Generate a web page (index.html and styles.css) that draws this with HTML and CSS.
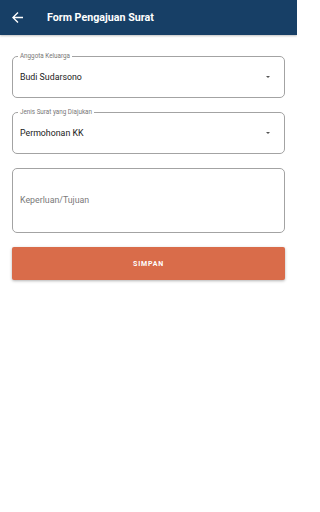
FILE: index.html
```html
<!DOCTYPE html>
<html lang="id">
<head>
<meta charset="utf-8">
<title>Form Pengajuan Surat</title>
<link rel="stylesheet" href="styles.css">
</head>
<body>
<header class="appbar">
  <svg class="back" viewBox="4 4 16 16" width="11" height="11" aria-hidden="true">
    <path d="M20 11H7.83l5.59-5.59L12 4l-8 8 8 8 1.41-1.41L7.83 13H20v-2z" fill="#fff"/>
  </svg>
  <h1 class="title">Form Pengajuan Surat</h1>
</header>
<main class="form">
  <div class="field select">
    <span class="label">Anggota Keluarga</span>
    <span class="value">Budi Sudarsono</span>
    <span class="caret"></span>
  </div>
  <div class="field select">
    <span class="label">Jenis Surat yang Diajukan</span>
    <span class="value">Permohonan KK</span>
    <span class="caret"></span>
  </div>
  <div class="field area">
    <span class="placeholder">Keperluan/Tujuan</span>
  </div>
  <button class="submit" type="button">SIMPAN</button>
</main>
</body>
</html>
```
FILE: styles.css
```css
* { box-sizing: border-box; }
html, body { margin: 0; padding: 0; background: #fff; }
body { font-family: Roboto, "Noto Sans", sans-serif; width: 297px; min-height: 512px; overflow: hidden; }

.appbar {
  height: 35px;
  background: #173f66;
  display: flex;
  align-items: center;
  padding-left: 12px;
  box-shadow: 0 1px 2px rgba(0,0,0,0.25);
}
.back { display: block; flex: none; }
.title {
  margin: 0 0 0 24px;
  font-size: 10.7px;
  font-weight: 700;
  color: #fff;
}

.form {
  padding: 21px 12px 0 12px;
  display: flex;
  flex-direction: column;
  gap: 14px;
}

.field {
  border: 1px solid #a3a3a3;
  border-radius: 5px;
  position: relative;
}
.select {
  height: 42px;
  padding: 0 14px 0 7px;
  display: flex;
  align-items: center;
}
.label {
  position: absolute;
  top: -4px;
  left: 5px;
  padding: 0 2px;
  background: #fff;
  font-size: 6.3px;
  line-height: 7px;
  color: #777;
}
.value {
  flex: 1;
  font-size: 8.8px;
  color: #222;
  line-height: 1;
}
.caret {
  width: 0;
  height: 0;
  border-left: 2.8px solid transparent;
  border-right: 2.8px solid transparent;
  border-top: 2.8px solid #555;
}

.area {
  height: 65px;
  padding: 0 7px;
  display: flex;
  align-items: center;
}
.placeholder {
  font-size: 8.8px;
  color: #7a7a7a;
  line-height: 1;
}

.submit {
  height: 33px;
  border: 0;
  border-radius: 2px;
  background: #d96c4a;
  color: #fff;
  font-family: Roboto, sans-serif;
  font-weight: 700;
  font-size: 7px;
  letter-spacing: 0.8px;
  box-shadow: 0 1px 3px rgba(0,0,0,0.3);
  padding: 0;
}
```
